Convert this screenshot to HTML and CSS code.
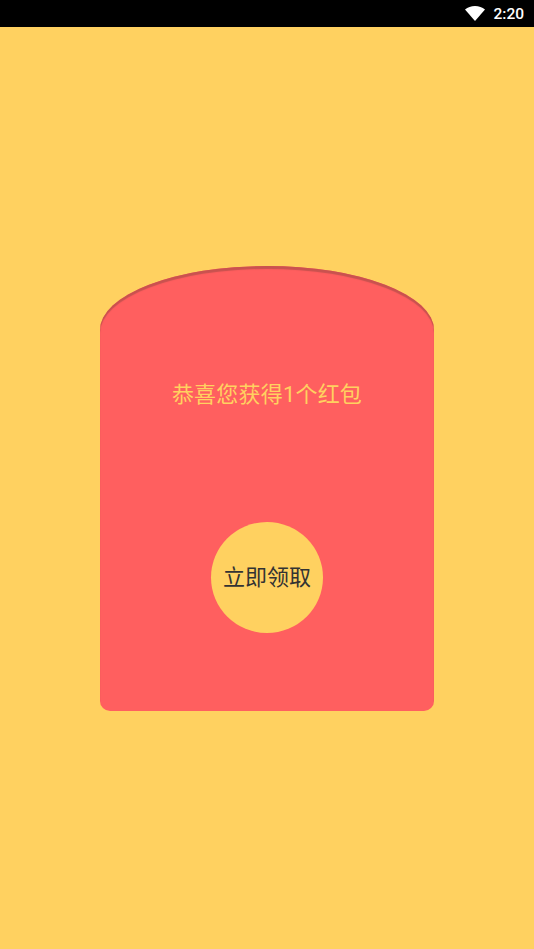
FILE: index.html
```html
<!DOCTYPE html>
<html lang="zh-CN">
<head>
<meta charset="utf-8">
<title>红包</title>
<link rel="stylesheet" href="styles.css">
</head>
<body>
<div class="status-bar">
  <svg class="wifi" viewBox="0 0 20 15" width="20" height="15" aria-hidden="true"><path d="M0 3.6C2.7 1.3 6.2 0 10 0s7.3 1.3 10 3.6L10 15z"/></svg>
  <span class="time">2:20</span>
</div>
<main class="page">
  <section class="packet">
    <h1 class="title">恭喜您获得1个红包</h1>
    <button class="open" type="button">立即领取</button>
  </section>
</main>
</body>
</html>
```
FILE: styles.css
```css
* { box-sizing: border-box; }
html, body { margin: 0; height: 100%; }
body {
  display: flex;
  flex-direction: column;
  background: #ffd160;
  font-family: Roboto, "Noto Sans CJK SC", sans-serif;
  overflow: hidden;
}
.status-bar {
  flex: none;
  height: 27px;
  background: #000;
  color: #fff;
  display: flex;
  align-items: center;
  justify-content: flex-end;
  gap: 8px;
  padding: 0 10px 0 0;
}
.wifi { fill: #fff; display: block; margin-top: -1px; }
.time { font-size: 15.5px; font-weight: 500; line-height: 27px; margin-top: 1px; }
.page {
  flex: 1;
  display: flex;
  justify-content: center;
  align-items: flex-start;
  padding-top: 239px;
}
.packet {
  width: 334px;
  height: 445px;
  background: #ff5f5f;
  border-radius: 167px 167px 10px 10px / 64px 64px 10px 10px;
  box-shadow: inset 0 3px 1px #c9524f;
  display: flex;
  flex-direction: column;
  align-items: center;
  padding-top: 113px;
}
.title {
  margin: 0;
  font-size: 22px;
  font-weight: 400;
  line-height: 32px;
  letter-spacing: 0.2px;
  color: #ffd160;
}
.open {
  margin-top: 111px;
  width: 112px;
  height: 111px;
  padding: 0 0 6px;
  border: 0;
  border-radius: 50%;
  background: #ffd160;
  color: #333;
  font: inherit;
  font-size: 22px;
  white-space: nowrap;
}
```
